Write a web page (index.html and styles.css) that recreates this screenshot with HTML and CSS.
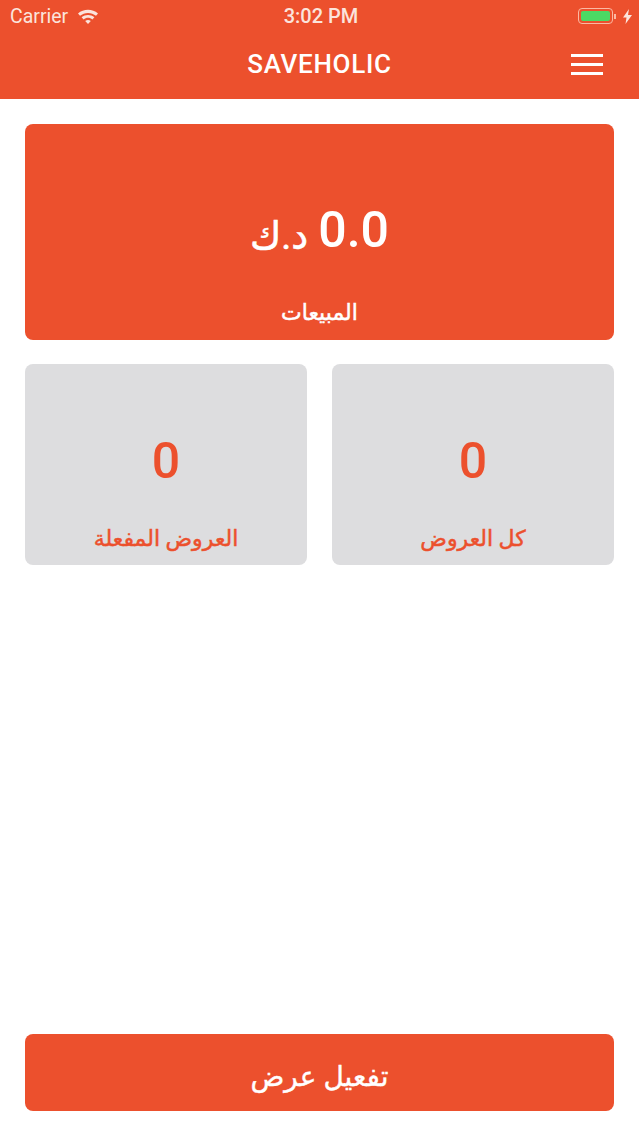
FILE: index.html
```html
<!DOCTYPE html>
<html lang="ar">

<head>
    <meta charset="UTF-8">
    <meta name="viewport" content="width=device-width, initial-scale=1.0">
    <title>SAVEHOLIC</title>
    <link rel="stylesheet" href="styles.css">
</head>

<body>

    <header class="top">
        <div class="status-bar" dir="ltr">
            <div class="status-left">
                <span>Carrier</span>
                <svg class="wifi" width="22" height="16" viewBox="0 0 22 16">
                    <path d="M1 5.6C6.6.6 15.4.6 21 5.6l-2 2.2C14.500 3.900 7.500 3.900 3 7.800z" fill="#fbe4dc"/>
                    <path d="M4.600 9.300c3.700-3.200 9.100-3.200 12.800 0l-2 2.200c-2.600-2.200-6.200-2.200-8.800 0z" fill="#fbe4dc"/>
                    <path d="M8.200 13c1.700-1.300 3.900-1.300 5.600 0L11 16z" fill="#fbe4dc"/>
                </svg>
            </div>
            <div class="status-time">3:02 PM</div>
            <div class="status-right">
                <div class="battery"><div class="battery-fill"></div></div>
                <div class="battery-tip"></div>
                <svg class="bolt" width="9" height="15" viewBox="0 0 9 15">
                    <path d="M6 0L0 8.500h3.500L2.500 15 9 6H5z" fill="#fbe4dc"/>
                </svg>
            </div>
        </div>
        <div class="nav-bar" dir="ltr">
            <div class="nav-title">SAVEHOLIC</div>
            <button class="menu-button" aria-label="menu">
                <span></span>
                <span></span>
                <span></span>
            </button>
        </div>
    </header>

    <main class="content">
        <section class="card sales">
            <div class="sales-value"><span class="number">0.0</span> <span class="currency">د.ك</span></div>
            <div class="card-label">المبيعات</div>
        </section>

        <div class="offers" dir="rtl">
            <section class="card offer">
                <div class="number">0</div>
                <div class="card-label">كل العروض</div>
            </section>
            <section class="card offer">
                <div class="number">0</div>
                <div class="card-label">العروض المفعلة</div>
            </section>
        </div>

        <button class="activate-button">تفعيل عرض</button>
    </main>

</body>

</html>
```

FILE: styles.css
```css
* {
    box-sizing: border-box;
}

body {
    margin: 0;
    height: 1136px;
    overflow: hidden;
    display: flex;
    flex-direction: column;
    background-color: #fff;
    font-family: Roboto, "DejaVu Sans", sans-serif;
}

.top {
    height: 99px;
    background-color: #ec502d;
    color: #fff;
}

.status-bar {
    height: 32px;
    padding: 0 7px 0 10px;
    display: grid;
    grid-template-columns: 1fr auto 1fr;
    align-items: center;
    font-size: 19.5px;
    color: #fbe4dc;
}

.status-left {
    display: flex;
    align-items: center;
    gap: 9px;
}

.status-time {
    font-size: 20px;
    font-weight: 500;
}

.status-right {
    display: flex;
    align-items: center;
    justify-content: flex-end;
}

.battery {
    width: 35px;
    height: 16px;
    padding: 2px;
    border: 1px solid #fbb9a3;
    border-radius: 4px;
}

.battery-fill {
    height: 100%;
    background-color: #4cd964;
    border-radius: 2px;
}

.battery-tip {
    width: 2px;
    height: 5px;
    margin: 0 7px 0 1px;
    background-color: #fbb9a3;
}

.nav-bar {
    height: 67px;
    padding: 0 36px 0 0;
    position: relative;
    display: flex;
    align-items: center;
    justify-content: flex-end;
}

.nav-title {
    position: absolute;
    left: 0;
    right: 0;
    top: 17px;
    text-align: center;
    font-size: 26px;
    font-weight: 500;
    letter-spacing: 0.7px;
}

.menu-button {
    width: 32px;
    height: 21px;
    margin-top: -2px;
    padding: 0;
    display: flex;
    flex-direction: column;
    justify-content: space-between;
    background: none;
    border: none;
}

.menu-button span {
    height: 3px;
    background-color: #fff;
}

.content {
    flex: 1;
    padding: 25px;
    display: flex;
    flex-direction: column;
    gap: 24px;
}

.card {
    border-radius: 8px;
    display: flex;
    flex-direction: column;
    align-items: center;
}

.sales {
    height: 216px;
    background-color: #ec502d;
    color: #fff;
    padding-top: 76px;
}

.sales-value {
    height: 60px;
    display: flex;
    align-items: center;
    gap: 10px;
    flex-direction: row-reverse;
}

.sales-value .number {
    font-size: 50px;
    font-weight: 500;
}

.currency {
    font-size: 38px;
    margin-top: 12px;
    -webkit-text-stroke: 0.6px currentColor;
}

.sales .card-label {
    margin-top: 39px;
}

.card-label {
    font-size: 22px;
    line-height: 28px;
    -webkit-text-stroke: 0.5px currentColor;
}

.offers {
    display: grid;
    grid-template-columns: 1fr 1fr;
    gap: 25px;
}

.offer {
    height: 201px;
    padding-top: 68px;
    background-color: #dddddf;
    color: #ec502d;
}

.offer .number {
    font-size: 50px;
    line-height: 58px;
    font-weight: 500;
}

.offer .card-label {
    margin-top: 35px;
}

.activate-button {
    margin-top: auto;
    height: 77px;
    padding: 8px 0 0;
    background-color: #ec502d;
    color: #fff;
    border: none;
    border-radius: 8px;
    font-family: inherit;
    font-size: 28px;
    -webkit-text-stroke: 0.4px currentColor;
}
```
